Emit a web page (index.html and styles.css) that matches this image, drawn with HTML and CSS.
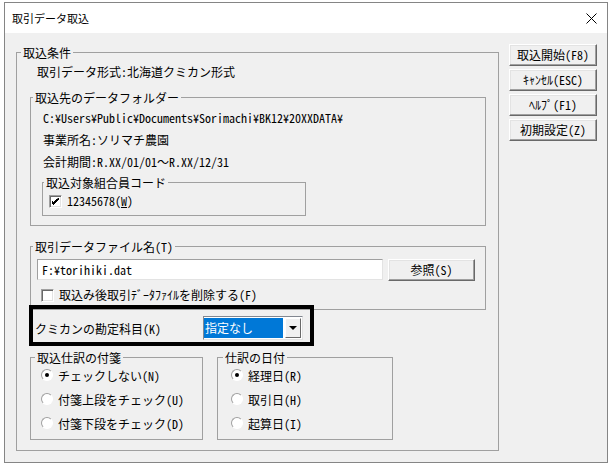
FILE: index.html
```html
<!DOCTYPE html>
<html lang="ja">
<head>
  <meta charset="UTF-8">
  <title>取引データ取込</title>
  <link rel="stylesheet" href="styles.css">
</head>
<body>
  <div class="window">
    <div class="titlebar">
      <span class="title">取引データ取込</span>
      <svg class="close" width="11" height="11" viewBox="0 0 11 11">
        <path d="M0.5 0.5 L10.5 10.5 M10.5 0.5 L0.5 10.5" stroke="#000" stroke-width="1"/>
      </svg>
    </div>

    <div class="client">
      <fieldset class="group main">
        <legend>取込条件</legend>
        <div class="group-body">
          <div class="line">取引データ形式:北海道クミカン形式</div>

          <fieldset class="group folder">
            <legend>取込先のデータフォルダー</legend>
            <div class="group-body">
              <div class="info">C:¥Users¥Public¥Documents¥Sorimachi¥BK12¥20XXDATA¥</div>
              <div class="info">事業所名:ソリマチ農園</div>
              <div class="info">会計期間:R.XX/01/01～R.XX/12/31</div>

              <fieldset class="group member">
                <legend>取込対象組合員コード</legend>
                <div class="group-body">
                  <label class="check">
                    <span class="box">
                      <svg width="7" height="7" viewBox="0 0 7 7">
                        <path d="M6 0h1v2h-1v1h-1v1h-1v1h-1v1h-1v1h-1v-1h-1v-1h-1v-3h1v1h1v1h1v-1h1v-1h1v-1h1z" fill="#000"/>
                      </svg>
                    </span>
                    <span>12345678(<u>W</u>)</span>
                  </label>
                </div>
              </fieldset>
            </div>
          </fieldset>

          <fieldset class="group file">
            <legend>取引データファイル名(T)</legend>
            <div class="group-body">
              <div class="file-row">
                <div class="input">F:¥torihiki.dat</div>
                <div class="btn">参照(S)</div>
              </div>
              <label class="check">
                <span class="box"></span>
                <span>取込み後取引ﾃﾞｰﾀﾌｧｲﾙを削除する(F)</span>
              </label>
            </div>
          </fieldset>

          <div class="highlight">
            <span class="combo-label">クミカンの勘定科目(K)</span>
            <div class="combo">
              <span class="combo-value">指定なし</span>
              <span class="combo-arrow"><span class="tri"></span></span>
            </div>
          </div>

          <div class="pair">
            <fieldset class="group tag">
              <legend>取込仕訳の付箋</legend>
              <div class="group-body options">
                <label class="option"><span class="radio on"></span>チェックしない(N)</label>
                <label class="option"><span class="radio"></span>付箋上段をチェック(U)</label>
                <label class="option"><span class="radio"></span>付箋下段をチェック(D)</label>
              </div>
            </fieldset>
            <fieldset class="group date">
              <legend>仕訳の日付</legend>
              <div class="group-body options">
                <label class="option"><span class="radio on"></span>経理日(R)</label>
                <label class="option"><span class="radio"></span>取引日(H)</label>
                <label class="option"><span class="radio"></span>起算日(I)</label>
              </div>
            </fieldset>
          </div>
        </div>
      </fieldset>

      <div class="buttons">
        <div class="btn">取込開始(F8)</div>
        <div class="btn">ｷｬﾝｾﾙ(ESC)</div>
        <div class="btn">ﾍﾙﾌﾟ(F1)</div>
        <div class="btn">初期設定(Z)</div>
      </div>
    </div>
  </div>
</body>
</html>
```

FILE: styles.css
```css
* {
  margin: 0;
  padding: 0;
  box-sizing: border-box;
}

body {
  background: #fff;
  font-family: "Noto Sans Mono CJK JP", "Noto Sans CJK JP", monospace;
  font-size: 12px;
  color: #000;
}

.window {
  margin: 2px 0 0 4px;
  width: 604px;
  height: 461px;
  border: 1px solid #858585;
  background: #f0f0f0;
  display: flex;
  flex-direction: column;
}

.titlebar {
  height: 30px;
  background: #fff;
  display: flex;
  align-items: center;
  justify-content: space-between;
  padding: 0 10px 0 7px;
}

.title {
  font-family: "Noto Sans CJK JP", sans-serif;
  font-size: 11px;
}

.client {
  display: flex;
  align-items: flex-start;
  gap: 10px;
  padding: 11px 10px 0 11px;
}

/* group boxes */
.group {
  border: 1px solid #a0a0a0;
  min-width: 0;
}

.group legend {
  line-height: 15px;
  padding: 0 2px;
}

.main {
  width: 483px;
  margin-top: 1px;
  padding: 4px 12px 10px 0;
}

.main > legend {
  margin-left: 4px;
}

.main > .group-body {
  padding-left: 13px;
}

.line {
  height: 16px;
  line-height: 16px;
  padding-left: 7px;
}

.folder {
  margin-top: 10px;
  padding: 2px 0 9px 0;
}

.folder > legend {
  margin-left: 2px;
}

.folder > .group-body {
  padding-left: 12px;
}

.info {
  height: 22px;
  line-height: 22px;
}

.member {
  width: 264px;
  margin: 2px 0 0 -1px;
  padding: 3px 0 6px 0;
}

.member > legend {
  margin-left: 1px;
}

.member > .group-body {
  padding-left: 6px;
}

.file {
  margin-top: 13px;
  padding: 5px 0 6px 0;
}

.file > legend {
  margin-left: 2px;
}

.file > .group-body {
  padding-left: 6px;
}

.file-row {
  display: flex;
  gap: 5px;
  height: 22px;
}

.input {
  width: 346px;
  height: 21px;
  background: #fff;
  border: 1px solid;
  border-color: #a0a0a0 #e3e3e3 #e3e3e3 #a0a0a0;
  padding-left: 4px;
  line-height: 19px;
}

.file .check {
  margin: 6px 0 0 4px;
}

/* checkbox */
.check {
  display: flex;
  align-items: center;
  gap: 5px;
  height: 16px;
  line-height: 16px;
}

.box {
  width: 13px;
  height: 13px;
  background: #fff;
  border: 1px solid;
  border-color: #a0a0a0 #fff #fff #a0a0a0;
  box-shadow: inset 1px 1px 0 #696969, inset -1px -1px 0 #e3e3e3;
  display: flex;
  align-items: center;
  justify-content: center;
}

/* buttons */
.btn {
  height: 22px;
  line-height: 20px;
  text-align: center;
  background: #f0f0f0;
  border: 1px solid;
  border-color: #fff #696969 #696969 #fff;
  box-shadow: inset -1px -1px 0 #a0a0a0, inset 1px 1px 0 #e3e3e3;
}

.file .btn {
  width: 87px;
}

.buttons {
  width: 88px;
  display: flex;
  flex-direction: column;
  gap: 3px;
}

/* highlighted combo row */
.highlight {
  width: 285px;
  margin: -5px 0 0 -1px;
  border: 4px solid #000;
  padding: 7px 0 2px 2px;
  display: flex;
  align-items: center;
}

.combo-label {
  width: 168px;
}

.combo {
  width: 100px;
  height: 24px;
  display: flex;
  gap: 2px;
  padding: 1px 1px 1px 0;
  background: #fff;
  border: 1px solid;
  border-color: #828790 #e3e3e3 #e3e3e3 #828790;
}

.combo-value {
  flex: 1;
  background: #0078d7;
  color: #fff;
  font-family: "Noto Sans CJK JP", sans-serif;
  font-size: 12px;
  line-height: 20px;
  padding-left: 1px;
}

.combo-arrow {
  width: 16px;
  background: #f0f0f0;
  border: 1px solid;
  border-color: #fff #696969 #696969 #fff;
  display: flex;
  align-items: center;
  justify-content: center;
}

.tri {
  width: 0;
  height: 0;
  border-left: 4px solid transparent;
  border-right: 4px solid transparent;
  border-top: 4px solid #000;
}

/* radio groups */
.pair {
  display: flex;
  gap: 14px;
  margin-top: 4px;
}

.tag,
.date {
  padding-bottom: 6px;
}

.options {
  display: flex;
  flex-direction: column;
  gap: 4px;
}

.tag {
  width: 173px;
}

.tag > legend {
  margin-left: 4px;
}

.tag > .group-body {
  padding-left: 10px;
}

.date {
  width: 176px;
}

.date > legend {
  margin-left: 5px;
}

.date > .group-body {
  padding-left: 13px;
}

.option {
  display: flex;
  align-items: center;
  gap: 5px;
  height: 20px;
}

.radio {
  width: 12px;
  height: 12px;
  border-radius: 50%;
  background: #fff;
  border: 1px solid;
  border-color: #a0a0a0 #fff #fff #a0a0a0;
  display: flex;
  align-items: center;
  justify-content: center;
}

.radio.on::after {
  content: "";
  width: 4px;
  height: 4px;
  border-radius: 50%;
  background: #000;
}
```
